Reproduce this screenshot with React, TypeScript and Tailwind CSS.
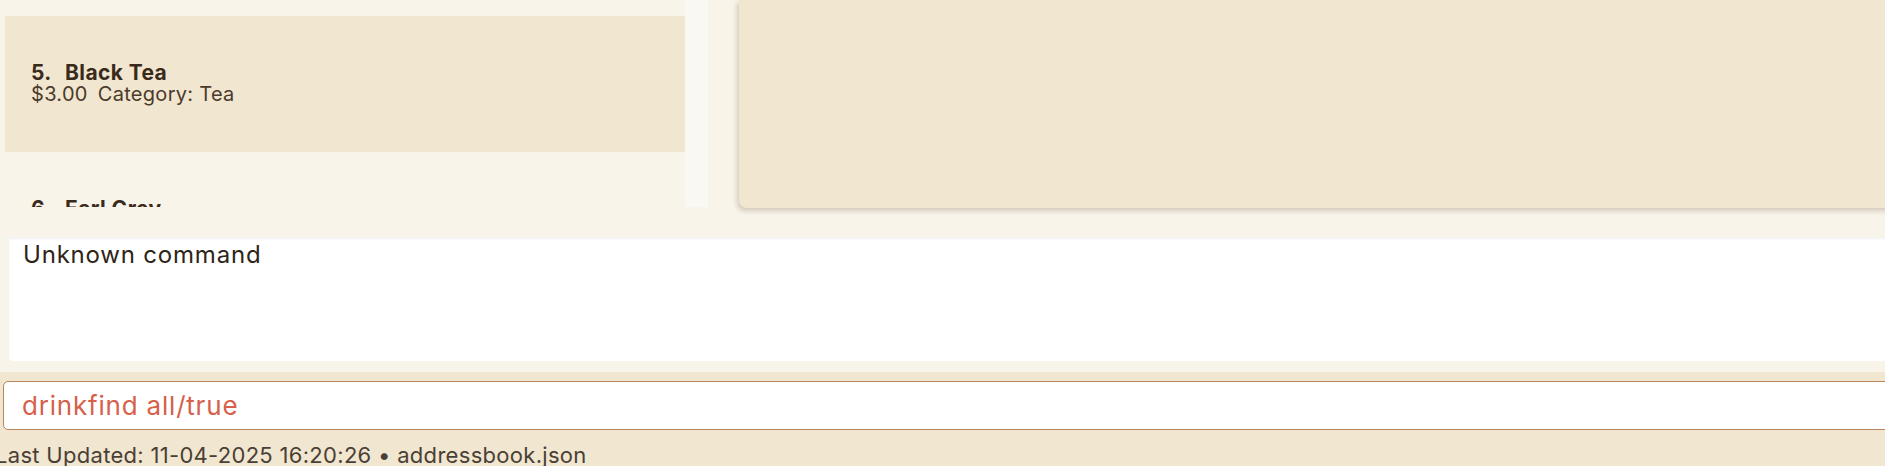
import React from "react";

export default function App() {
  return (
    <div className="w-[1885px] h-[466px] overflow-hidden bg-[#f8f4e9] font-['Inter',sans-serif] flex flex-col text-[#3a2a1c]">
      {/* Top section */}
      <div className="h-[237px] shrink-0 flex">
        <div className="w-[708px] shrink-0 flex flex-col">
          <div className="h-[207px] flex overflow-hidden">
            <div className="w-[685px] shrink-0 flex flex-col pl-[5px]">
              <div className="h-[16px] shrink-0" />
              <div className="h-[136px] shrink-0 bg-[#f1e6cf] flex flex-col justify-center pl-[26px] pb-[2px]">
                <div className="flex items-baseline text-[21px] font-bold leading-[22px] tracking-[0.4px] text-[#3a2a1c]">
                  <span className="w-[34px]">5.</span>
                  <span>Black Tea</span>
                </div>
                <div className="flex items-baseline gap-[10px] text-[20px] leading-[21px] tracking-[0.3px] text-[#4a3a2c]">
                  <span>$3.00</span>
                  <span>Category: Tea</span>
                </div>
              </div>
              <div className="h-[136px] shrink-0 flex flex-col justify-center pl-[26px] pb-[2px]">
                <div className="flex items-baseline text-[21px] font-bold leading-[22px] tracking-[0.4px] text-[#3a2a1c]">
                  <span className="w-[34px]">6.</span>
                  <span>Earl Grey</span>
                </div>
                <div className="flex items-baseline gap-[10px] text-[20px] leading-[21px] tracking-[0.3px] text-[#4a3a2c]">
                  <span>$3.50</span>
                  <span>Category: Tea</span>
                </div>
              </div>
            </div>
            <div className="w-[23px] shrink-0 bg-[#faf8f2]" />
          </div>
        </div>
        <div className="flex-1 pl-[31px] -mr-[20px]">
          <div className="h-[208px] bg-[#f1e6cf] rounded-bl-[8px] shadow-[-2px_3px_5px_rgba(80,60,30,0.22)]" />
        </div>
      </div>

      {/* Result section */}
      <div className="h-[135px] shrink-0 pl-[9px] -mr-[20px] pb-[11px] flex">
        <div className="flex-1 bg-white rounded-bl-[4px] shadow-[inset_0_3px_3px_-1px_rgba(0,0,0,0.06)] pl-[14px] pt-[3px]">
          <div className="text-[24px] leading-[30px] tracking-[0.8px] text-[#2e2418]">Unknown command</div>
        </div>
      </div>

      {/* Command section */}
      <div className="flex-1 bg-[#f1e6cf] pt-[9px] pl-[3px] -mr-[20px] flex flex-col">
        <div className="h-[49px] bg-white border border-[#b9855c] rounded-[5px] flex items-center pl-[18px]">
          <span className="text-[26px] tracking-[0.8px] text-[#d6604a]">drinkfind all/true</span>
        </div>
        <div className="mt-[12px] -ml-[8px] text-[22px] leading-[26px] tracking-[0.3px] text-[#4a3f36] whitespace-nowrap">
          Last Updated: 11-04-2025 16:20:26 • addressbook.json
        </div>
      </div>
    </div>
  );
}
